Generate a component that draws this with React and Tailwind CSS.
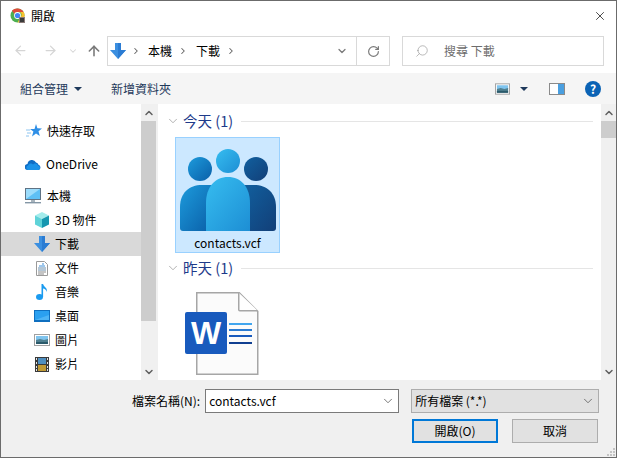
import React from 'react';
import { ChevronDown, ChevronRight, ChevronUp, X, ArrowLeft, ArrowRight, ArrowUp, RotateCw, Search } from 'lucide-react';

const font = { fontFamily: '"Noto Sans CJK TC", "Noto Sans", sans-serif' };

const DownArrow = ({ size = 16 }) => (
  <svg width={size} height={size} viewBox="0 0 16 16">
    <path d="M5 0h6v7h5l-8 9-8-9h5z" fill="#3b8fe0" />
    <path d="M8 0h3v7h5l-8 9z" fill="#2b7cd3" />
  </svg>
);

const PictureIcon = ({ w = 16, h = 12 }) => (
  <svg width={w} height={h} viewBox="0 0 16 12">
    <rect x="0.5" y="0.5" width="15" height="11" fill="#fff" stroke="#a0a0a0" />
    <rect x="2" y="2" width="12" height="4" fill="#7fc4ee" />
    <path d="M2 6l4-1 4 1 4-1v5H2z" fill="#4f7f8f" />
    <rect x="2" y="8" width="12" height="2" fill="#2b5a6b" />
  </svg>
);

const StarIcon = () => (
  <svg width="16" height="16" viewBox="0 0 16 16">
    <path d="M10 1l1.4 4.2L16 5.5l-3.5 2.8 1.3 4.7L10 10.5 6 13.5l1.4-5L4 6h4.5z" fill="#2f8fe6" />
    <path d="M0 7h4M1 10h4M0 13h3" stroke="#8cc4f0" />
  </svg>
);

const CloudIcon = () => (
  <svg width="16" height="11" viewBox="0 0 16 11">
    <path d="M3 11a3 3 0 0 1-.5-6A4.5 4.5 0 0 1 11 3.5a3.5 3.5 0 0 1 2.5 2.3A2.7 2.7 0 0 1 13.5 11z" fill="#0f6cc4" />
    <path d="M3 11a2.4 2.4 0 0 1 0-4.6 3 3 0 0 1 5-1 3 3 0 0 1 5 1 2.4 2.4 0 0 1 .5 4.6z" fill="#1b92e8" />
  </svg>
);

const PcIcon = () => (
  <svg width="16" height="16" viewBox="0 0 16 16">
    <rect x="0.5" y="0.5" width="15" height="11" fill="#5ec0f5" stroke="#5f7385" />
    <path d="M1 1h14L1 11z" fill="#9cdcfb" />
    <rect x="6" y="12" width="4" height="2" fill="#a8b4bd" />
    <rect x="0" y="14" width="16" height="1.4" fill="#8497a6" />
  </svg>
);

const CubeIcon = () => (
  <svg width="16" height="16" viewBox="0 0 16 16">
    <path d="M8 0l7 3.5L8 7 1 3.5z" fill="#a3ecec" />
    <path d="M1 3.5L8 7v9l-7-3.5z" fill="#5fd3d8" />
    <path d="M15 3.5L8 7v9l7-3.5z" fill="#1597b0" />
  </svg>
);

const DocIcon = () => (
  <svg width="12" height="15" viewBox="0 0 12 15">
    <path d="M.5.5h8l3 3v11H.5z" fill="#fff" stroke="#9a9a9a" />
    <path d="M6 3h2M3 5h6" stroke="#3f8fd8" />
    <path d="M2 7h8M2 9h8" stroke="#6a8fae" />
    <path d="M2 11h8M2 13h6" stroke="#8a8a8a" />
  </svg>
);

const MusicIcon = () => (
  <svg width="12" height="16" viewBox="0 0 12 16">
    <ellipse cx="3.5" cy="13" rx="3.5" ry="3" fill="#1a9bf0" />
    <path d="M5.5 0h1.6c.4 3 4.9 3.4 3.6 8-.3-2.6-2.2-3.2-3.6-3.6V13H5.5z" fill="#1a9bf0" />
  </svg>
);

const DesktopIcon = () => (
  <svg width="16" height="12" viewBox="0 0 16 12">
    <rect x="0" y="0" width="16" height="12" fill="#0f6fbf" />
    <rect x="1" y="1" width="14" height="9" fill="#2aa0f0" />
    <path d="M1 10l14-5v5z" fill="#4db4f5" />
  </svg>
);

const FilmIcon = () => (
  <svg width="14" height="15" viewBox="0 0 14 15">
    <rect width="14" height="15" fill="#3a3a3a" />
    <rect x="3" y="1" width="8" height="6" fill="#4f8fc0" />
    <rect x="3" y="8" width="8" height="6" fill="#c09a35" />
    <path d="M1 1h1v2H1zM1 5h1v2H1zM1 9h1v2H1zM1 12h1v2H1zM12 1h1v2h-1zM12 5h1v2h-1zM12 9h1v2h-1zM12 12h1v2h-1z" fill="#e5e5e5" />
  </svg>
);

const ChromeIcon = () => (
  <svg width="16" height="16" viewBox="0 0 16 16">
    <circle cx="7.5" cy="7.5" r="7" fill="#4caf50" />
    <path d="M7.5.5a7 7 0 0 1 6.1 3.5H7.5a3.5 3.5 0 0 0-3.2 2L2 2.6A7 7 0 0 1 7.5.5z" fill="#dd4b39" />
    <path d="M13.6 4a7 7 0 0 1-6.1 10.5L10.6 9a3.5 3.5 0 0 0-.6-5z" fill="#fbc02d" />
    <circle cx="7.5" cy="7.5" r="3.4" fill="#fff" />
    <circle cx="7.5" cy="7.5" r="2.6" fill="#4285f4" />
    <rect x="9" y="9" width="6" height="6" fill="#8a7a78" />
    <rect x="10" y="10" width="4" height="4" fill="#3a3a3a" />
  </svg>
);

const PeopleIcon = () => (
  <svg width="96" height="82" viewBox="0 0 96 82">
    <defs>
      <linearGradient id="pl" x1="0" y1="0" x2="1" y2="1">
        <stop offset="0" stopColor="#1d9bdc" />
        <stop offset="1" stopColor="#0a5fa8" />
      </linearGradient>
      <linearGradient id="pr" x1="0" y1="0" x2="1" y2="1">
        <stop offset="0" stopColor="#11609f" />
        <stop offset="1" stopColor="#123f78" />
      </linearGradient>
      <linearGradient id="pc" x1="0" y1="0" x2="1" y2="1">
        <stop offset="0" stopColor="#36bdf0" />
        <stop offset="1" stopColor="#1d8ed4" />
      </linearGradient>
    </defs>
    <circle cx="20" cy="20" r="12" fill="url(#pl)" />
    <circle cx="76" cy="20" r="12" fill="url(#pr)" />
    <circle cx="48" cy="12" r="12" fill="url(#pc)" />
    <path d="M0 58c0-14 9-22 22-22h10v46H3a3 3 0 0 1-3-3z" fill="url(#pl)" />
    <path d="M96 58c0-14-9-22-22-22H62v46h31a3 3 0 0 0 3-3z" fill="url(#pr)" />
    <path d="M26 54c0-16 9-26 22-26s22 10 22 26v28H26z" fill="url(#pc)" />
  </svg>
);

const WordIcon = () => (
  <svg width="74" height="84" viewBox="0 0 74 84">
    <path d="M11.75.75h42.5l18.5 18.5v63h-61z" fill="#fbfbfb" stroke="#a6a6a6" strokeWidth="1.5" />
    <path d="M53.75.75v17a1 1 0 0 0 1 1h18" fill="#fff" stroke="#a6a6a6" strokeWidth="1.5" />
    <rect x="0" y="20" width="42" height="42" rx="2" fill="#185abd" />
    <text x="21" y="52" textAnchor="middle" fontSize="32" fontWeight="700" fill="#fff" fontFamily="Liberation Sans">W</text>
    <rect x="44" y="31" width="23" height="2" fill="#41a5ee" />
    <rect x="44" y="37" width="23" height="2" fill="#2b7cd3" />
    <rect x="44" y="43" width="23" height="2" fill="#185abd" />
    <rect x="44" y="50" width="23" height="2" fill="#103f91" />
  </svg>
);

const navItems = [
  { label: '本機', icon: <PcIcon />, top: true },
  { label: '3D 物件', icon: <CubeIcon /> },
  { label: '下載', icon: <DownArrow />, active: true },
  { label: '文件', icon: <DocIcon /> },
  { label: '音樂', icon: <MusicIcon /> },
  { label: '桌面', icon: <DesktopIcon /> },
  { label: '圖片', icon: <PictureIcon /> },
  { label: '影片', icon: <FilmIcon /> },
];

const NavRow = ({ item }) => (
  <div className={`flex h-[24px] items-center ${item.top ? 'pl-[24px]' : 'pl-[33px]'} ${item.active ? 'bg-[#d9d9d9]' : ''}`}>
    <span className="flex w-[16px] justify-center">{item.icon}</span>
    <span className={`text-[12px] text-black ${item.top ? 'ml-[6px]' : 'ml-[5px]'}`}>{item.label}</span>
  </div>
);

const GroupHeader = ({ label }) => (
  <div className="flex h-[24px] items-center pl-[8px] pr-[8px]">
    <ChevronDown size={14} strokeWidth={1} className="text-[#7a7a7a]" />
    <span className="ml-[3px] text-[14.5px] text-[#1e3a8a]">{label}</span>
    <span className="ml-[8px] h-px flex-1 bg-[#e5e5e5]" />
  </div>
);

const Scrollbar = ({ thumb }) => (
  <div className="flex w-[15px] shrink-0 flex-col bg-[#f0f0f0]">
    <div className="flex h-[17px] items-center justify-center">
      <ChevronUp size={12} strokeWidth={3} className="text-[#606060]" />
    </div>
    <div className={`${thumb} bg-[#cdcdcd]`} />
    <div className="flex flex-1 items-end justify-center pb-[2px]">
      <ChevronDown size={12} strokeWidth={3} className="text-[#606060]" />
    </div>
  </div>
);

export default function App() {
  return (
    <div style={font} className="flex h-[458px] w-[617px] flex-col overflow-hidden border border-[#6b6b6b] bg-white text-[12px]">
      {/* title bar */}
      <div className="flex h-[29px] shrink-0 items-center pl-[9px] pr-[9px]">
        <ChromeIcon />
        <span className="ml-[5px] text-[12px] text-black">開啟</span>
        <X size={14} strokeWidth={1.2} className="ml-auto text-black" />
      </div>

      {/* nav row */}
      <div className="flex h-[43px] shrink-0 items-start pt-[6px]">
        <div className="flex h-[29px] w-[106px] items-center pl-[12px]">
          <ArrowLeft size={15} strokeWidth={2} className="text-[#d5d5d5]" />
          <ArrowRight size={15} strokeWidth={2} className="ml-[15px] text-[#d5d5d5]" />
          <ChevronDown size={10} strokeWidth={2.5} className="ml-[10px] text-[#d5d5d5]" />
          <ArrowUp size={16} strokeWidth={2.4} className="ml-[8px] text-[#7a7a7a]" />
        </div>
        <div className="flex h-[30px] w-[283px] items-center border border-[#d9d9d9]">
          <span className="ml-[2px]"><DownArrow /></span>
          <ChevronRight size={10} strokeWidth={2.5} className="ml-[5px] text-[#606060]" />
          <span className="ml-[7px] text-black">本機</span>
          <ChevronRight size={10} strokeWidth={2.5} className="ml-[6px] text-[#606060]" />
          <span className="ml-[8px] text-black">下載</span>
          <ChevronRight size={10} strokeWidth={2.5} className="ml-[6px] text-[#606060]" />
          <ChevronDown size={12} strokeWidth={2.5} className="ml-auto mr-[8px] text-[#7a7a7a]" />
          <div className="flex h-full w-[33px] items-center justify-center border-l border-[#d9d9d9]">
            <RotateCw size={13} strokeWidth={2.2} className="ml-[1px] text-[#7a7a7a]" />
          </div>
        </div>
        <div className="ml-[12px] flex h-[30px] w-[202px] items-center border border-[#d9d9d9] pl-[12px]">
          <Search size={14} strokeWidth={1} className="-scale-x-100 text-[#8a8a8a]" />
          <span className="ml-[15px] text-[#6d6d6d]">搜尋 下載</span>
        </div>
      </div>

      {/* toolbar */}
      <div className="flex h-[31px] shrink-0 items-center bg-[#f5f5f5] pl-[19px] text-[#1e395b]">
        <span>組合管理</span>
        <span className="ml-[6px] h-0 w-0 border-x-[4px] border-t-[4px] border-x-transparent border-t-[#1e395b]" />
        <span className="ml-[29px]">新增資料夾</span>
        <span className="ml-auto"><PictureIcon w={15} /></span>
        <span className="ml-[10px] h-0 w-0 border-x-[4px] border-t-[4px] border-x-transparent border-t-[#1e395b]" />
        <span className="ml-[21px] flex h-[12px] w-[16px] border border-[#8a8a8a] bg-white">
          <span className="ml-[8px] w-[6px] bg-[#4a9fe0]" />
        </span>
        <span className="ml-[20px] mr-[15px] flex h-[16px] w-[16px] items-center justify-center rounded-full bg-[#0b63b5] text-[12px] font-bold text-white">?</span>
      </div>

      {/* body */}
      <div className="flex h-[276px] shrink-0">
        <div className="flex w-[140px] shrink-0 flex-col overflow-hidden pt-[15px]">
          <div className="flex h-[24px] items-center pl-[25px]">
            <StarIcon />
            <span className="ml-[5px] text-black">快速存取</span>
          </div>
          <div className="mt-[9px] flex h-[24px] items-center pl-[24px]">
            <CloudIcon />
            <span className="ml-[5px] text-black">OneDrive</span>
          </div>
          <div className="mt-[8px]">
            {navItems.map((item) => (
              <NavRow key={item.label} item={item} />
            ))}
          </div>
        </div>
        <Scrollbar thumb="h-[200px]" />
        <div className="w-[2px] shrink-0 bg-[#f0f0f0]" />
        <div className="flex min-w-0 flex-1 flex-col overflow-hidden bg-white pt-[5px]">
          <GroupHeader label="今天 (1)" />
          <div className="pl-[17px]">
            <div className="mt-[4px] flex h-[116px] w-[105px] flex-col items-center border border-[#99d1ff] bg-[#cce8ff] pt-[11px]">
              <PeopleIcon />
              <span className="mt-[3px] text-[12px] text-black">contacts.vcf</span>
            </div>
          </div>
          <div className="mt-[3px]">
            <GroupHeader label="昨天 (1)" />
          </div>
          <div className="pl-[27px] pt-[12px]">
            <WordIcon />
          </div>
        </div>
        <Scrollbar thumb="h-[17px]" />
      </div>

      {/* footer */}
      <div className="relative flex flex-1 flex-col bg-[#f0f0f0] pt-[9px]">
        <div className="flex h-[24px] items-center">
          <span className="ml-[131px] text-black">檔案名稱(N):</span>
          <div className="ml-[5px] flex h-[24px] w-[194px] items-center border border-[#7a7a7a] bg-white pl-[3px] text-black">
            <span>contacts.vcf</span>
            <ChevronDown size={14} strokeWidth={1.3} className="ml-auto mr-[3px] text-[#505050]" />
          </div>
          <div className="ml-[12px] flex h-[24px] w-[188px] items-center border border-[#adadad] bg-[#e1e1e1] pl-[3px] text-black">
            <span>所有檔案 (*.*)</span>
            <ChevronDown size={14} strokeWidth={1.3} className="ml-auto mr-[3px] text-[#505050]" />
          </div>
        </div>
        <div className="mt-[6px] flex items-center">
          <div className="ml-[411px] flex h-[24px] w-[86px] items-center justify-center border-2 border-[#0078d7] bg-[#e1e1e1] text-black">開啟(O)</div>
          <div className="ml-[14px] flex h-[24px] w-[86px] items-center justify-center border border-[#adadad] bg-[#e1e1e1] text-black">取消</div>
        </div>
        <svg width="10" height="10" viewBox="0 0 10 10" className="absolute bottom-0 right-0">
          <path d="M7 1h2v2H7zM4 4h2v2H4zM7 4h2v2H7zM1 7h2v2H1zM4 7h2v2H4zM7 7h2v2H7z" fill="#c4c4c4" />
        </svg>
      </div>
    </div>
  );
}
